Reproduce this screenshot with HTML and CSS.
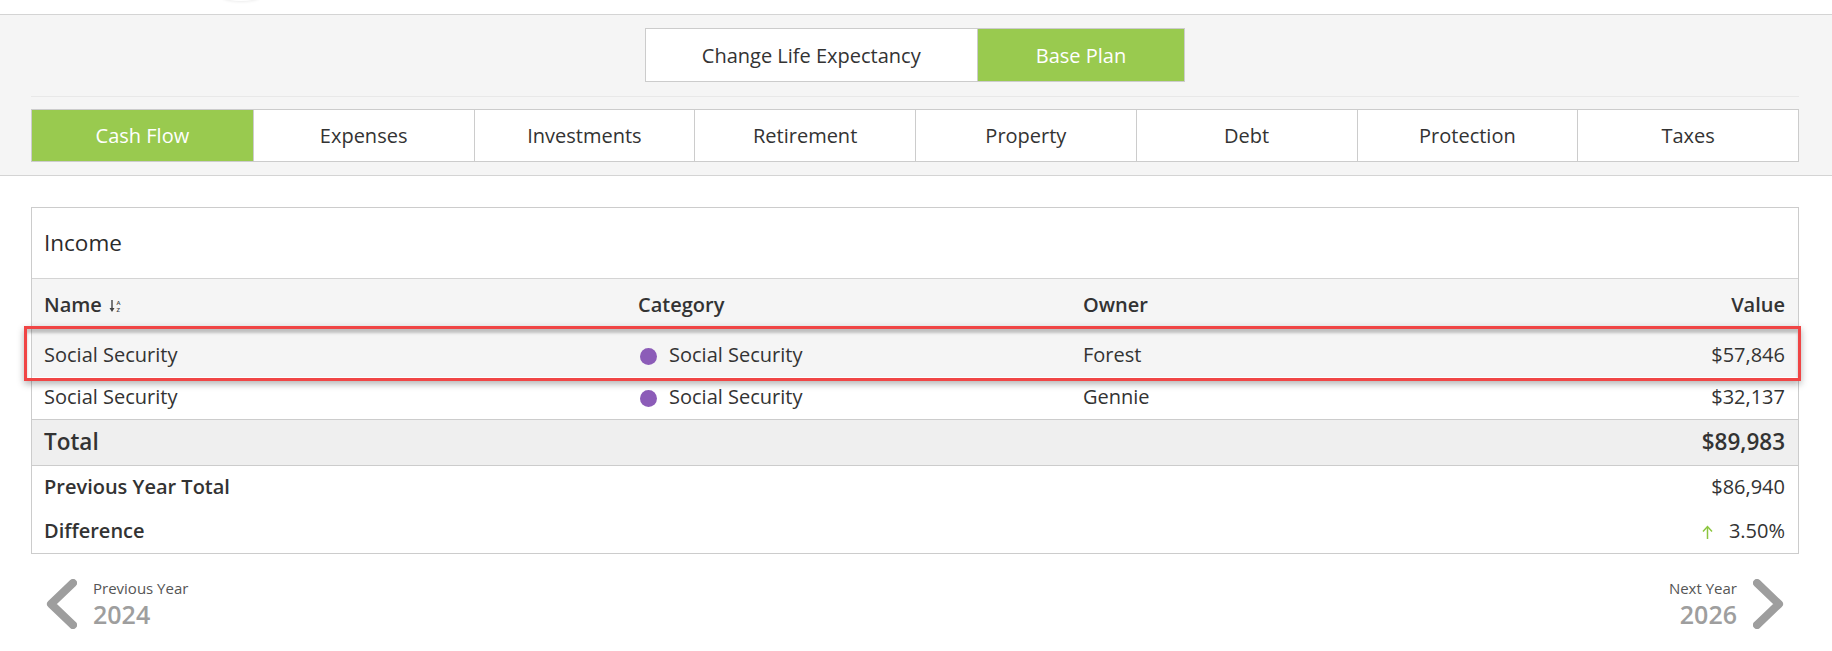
FILE: index.html
```html
<!DOCTYPE html>
<html lang="en">
<head>
    <meta charset="UTF-8">
    <meta name="viewport" content="width=device-width, initial-scale=1.0">
    <title>Cash Flow - Income</title>
    <link rel="stylesheet" href="styles.css">
</head>
<body>

    <div class="topbar"><span class="avatar"></span></div>

    <div class="plan-panel">
        <div class="plan-switch">
            <button class="plan-btn">Change Life Expectancy</button>
            <button class="plan-btn active">Base Plan</button>
        </div>
        <hr class="divider">
        <nav class="tabs">
            <a class="tab active">Cash Flow</a>
            <a class="tab">Expenses</a>
            <a class="tab">Investments</a>
            <a class="tab">Retirement</a>
            <a class="tab">Property</a>
            <a class="tab">Debt</a>
            <a class="tab">Protection</a>
            <a class="tab">Taxes</a>
        </nav>
    </div>

    <section class="card">
        <h2 class="card-title">Income</h2>

        <div class="grid-row head">
            <div>Name
                <svg class="sort-icon" width="13" height="14" viewBox="0 0 13 14">
                    <line x1="3" y1="1" x2="3" y2="10" stroke="#444" stroke-width="1.4"/>
                    <polygon points="0.5,9 5.5,9 3,13" fill="#444"/>
                    <text x="7.5" y="6" font-size="6" font-family="Open Sans, sans-serif" fill="#444">A</text>
                    <text x="7.5" y="13" font-size="6" font-family="Open Sans, sans-serif" fill="#444">Z</text>
                </svg>
            </div>
            <div>Category</div>
            <div>Owner</div>
            <div class="num">Value</div>
        </div>

        <div class="grid-row item selected">
            <div>Social Security</div>
            <div><span class="dot"></span>Social Security</div>
            <div>Forest</div>
            <div class="num">$57,846</div>
        </div>
        <div class="grid-row item last">
            <div>Social Security</div>
            <div><span class="dot"></span>Social Security</div>
            <div>Gennie</div>
            <div class="num">$32,137</div>
        </div>

        <div class="sum-row total">
            <span>Total</span>
            <span>$89,983</span>
        </div>
        <div class="sum-row">
            <span class="label">Previous Year Total</span>
            <span>$86,940</span>
        </div>
        <div class="sum-row diff">
            <span class="label">Difference</span>
            <span>
                <svg class="up-arrow" width="11" height="14" viewBox="0 0 11 14">
                    <line x1="5.5" y1="2" x2="5.5" y2="14" stroke="#8cc63f" stroke-width="1.5"/>
                    <polyline points="1,6.5 5.5,1.5 10,6.5" fill="none" stroke="#8cc63f" stroke-width="1.5"/>
                </svg>
                3.50%
            </span>
        </div>
    </section>

    <div class="year-nav">
        <a class="year-link">
            <svg width="32" height="50" viewBox="0 0 32 50">
                <polyline points="28,4 6,25 28,46" fill="none" stroke="#9e9e9e" stroke-width="8" stroke-linecap="round" stroke-linejoin="round"/>
            </svg>
            <span class="year-text">
                <span class="year-label">Previous Year</span>
                <span class="year-num">2024</span>
            </span>
        </a>
        <a class="year-link next">
            <span class="year-text">
                <span class="year-label">Next Year</span>
                <span class="year-num">2026</span>
            </span>
            <svg width="32" height="50" viewBox="0 0 32 50">
                <polyline points="4,4 26,25 4,46" fill="none" stroke="#9e9e9e" stroke-width="8" stroke-linecap="round" stroke-linejoin="round"/>
            </svg>
        </a>
    </div>

</body>
</html>
```

FILE: styles.css
```css
* {
    box-sizing: border-box;
}
body {
    margin: 0;
    font-family: "Open Sans", "Liberation Sans", sans-serif;
    color: #333;
    background-color: #fff;
}

/* barra superior */
.topbar {
    height: 15px;
    border-bottom: 1px solid #d4d4d4;
    padding-left: 222px;
    overflow: hidden;
}
.avatar {
    display: block;
    width: 38px;
    height: 10px;
    margin-top: -9px;
    border-radius: 50%;
    box-shadow: 0 1px 3px rgba(0, 0, 0, 0.08);
}

/* painel do plano */
.plan-panel {
    background-color: #f5f5f5;
    border-bottom: 1px solid #d4d4d4;
    padding: 13px 33px 13px 31px;
}
.plan-switch {
    display: flex;
    justify-content: center;
}
.plan-btn {
    height: 54px;
    padding: 0 56px;
    font-family: inherit;
    font-size: 20px;
    color: #333;
    background-color: #fff;
    border: 1px solid #ccc;
}
.plan-btn + .plan-btn {
    border-left: 0;
}
.plan-btn.active {
    background-color: #99ca4f;
    color: #fff;
    padding: 0 58px;
}
.divider {
    margin: 14px 0 12px;
    border: 0;
    border-top: 1px solid #e8e8e8;
}
.tabs {
    display: grid;
    grid-template-columns: repeat(8, 1fr);
    border: 1px solid #ccc;
    background-color: #fff;
}
.tab {
    height: 51px;
    display: flex;
    align-items: center;
    justify-content: center;
    font-size: 20px;
    border-left: 1px solid #ccc;
    cursor: pointer;
}
.tab:first-child {
    border-left: 0;
}
.tab.active {
    background-color: #99ca4f;
    color: #fff;
}

/* cartão de receitas */
.card {
    margin: 31px 33px 0 31px;
    border: 1px solid #ccc;
}
.card-title {
    margin: 0;
    height: 71px;
    line-height: 69px;
    padding-left: 12px;
    font-size: 22.5px;
    font-weight: 400;
    color: #2b2b2b;
    border-bottom: 1px solid #d4d4d4;
}
.grid-row {
    display: grid;
    grid-template-columns: 594px 445px 1fr 1fr;
    align-items: center;
    padding: 0 13px 0 12px;
    font-size: 20px;
}
.grid-row .num {
    text-align: right;
}
.head {
    height: 48px;
    padding-top: 3px;
    font-weight: 600;
    background-color: #f5f5f5;
}
.sort-icon {
    margin-left: 2px;
    vertical-align: -1px;
}
.item {
    height: 43px;
}
.item.last {
    padding-bottom: 4px;
    border-bottom: 1px solid #ccc;
}
.selected {
    position: relative;
    height: 50px;
    padding-top: 5px;
    background-color: #f5f5f5;
}
/* destaque da linha selecionada */
.selected::after {
    content: "";
    position: absolute;
    top: -1px;
    bottom: -4px;
    left: -8px;
    right: -3px;
    border: 3px solid #f04545;
    box-shadow: 0 3px 7px rgba(0, 0, 0, 0.3), inset 0 4px 3px rgba(0, 0, 0, 0.22);
    pointer-events: none;
}
.dot {
    display: inline-block;
    width: 17px;
    height: 17px;
    margin: 0 12px 0 2px;
    border-radius: 50%;
    background-color: #8c5cb8;
    vertical-align: -3px;
}
.sum-row {
    display: flex;
    justify-content: space-between;
    align-items: center;
    height: 43px;
    padding: 0 13px 2px 12px;
    font-size: 20px;
}
.sum-row .label {
    font-weight: 600;
}
.sum-row.total {
    height: 46px;
    font-size: 22.5px;
    font-weight: 600;
    background-color: #efefef;
    border-bottom: 1px solid #ccc;
}
.sum-row.diff {
    height: 44px;
}
.up-arrow {
    margin-right: 11px;
    vertical-align: -1px;
}

/* navegação entre anos */
.year-nav {
    display: flex;
    justify-content: space-between;
    margin: 24px 33px 0 31px;
    padding: 0 14px;
}
.year-link {
    display: flex;
    align-items: center;
    gap: 16px;
    cursor: pointer;
}
.year-text {
    display: flex;
    flex-direction: column;
}
.year-link.next .year-text {
    align-items: flex-end;
}
.year-label {
    font-size: 15px;
    line-height: 20px;
    color: #555;
}
.year-num {
    font-size: 25px;
    line-height: 32px;
    font-weight: 600;
    color: #9e9e9e;
}
```
